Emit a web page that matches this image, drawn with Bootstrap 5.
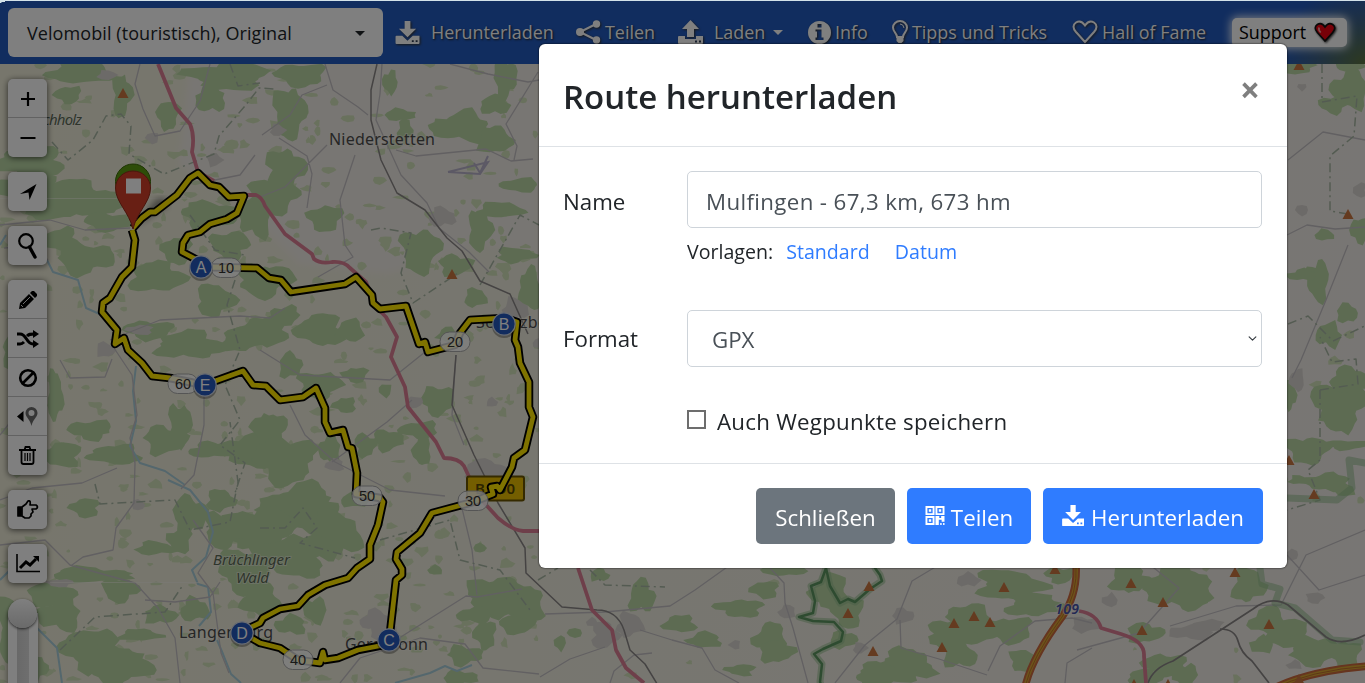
<!DOCTYPE html>
<html lang="de">
<head>
  <meta charset="UTF-8">
  <meta name="viewport" content="width=device-width, initial-scale=1">
  <title>Route herunterladen</title>
  <link href="https://cdn.jsdelivr.net/npm/bootstrap@5.3.3/dist/css/bootstrap.min.css" rel="stylesheet">
  <style>
    body {
      font-family: "Open Sans", "Noto Sans", sans-serif;
      height: 683px;
      overflow: hidden;
      background-color: #f0ede5;
    }
    /* top bar */
    .topbar {
      height: 64px;
      padding: 0 18px 0 8px;
      background: radial-gradient(ellipse 90px 80px at 100% 100%, #5c7440 0, #3d6188 55%, #225abe 100%), #225abe;
      position: relative;
    }
    .topline {
      position: absolute;
      top: 0;
      left: 0;
      z-index: 1060;
      width: 100%;
      height: 1px;
      background-color: #d3e2e9;
    }
    .topline::after {
      content: "";
      position: absolute;
      width: 10px;
      height: 3px;
      background: linear-gradient(165deg, #d3e2e9 50%, transparent 52%);
    }
    .profile {
      width: 375px;
      height: 49px;
      padding: 2px 18px 0 19px;
      margin: 8px 12px 0 0;
      border-radius: 6px;
      background-color: #fff;
      color: #212529;
      font-size: 18px;
      letter-spacing: .08px;
    }
    .menu-grid {
      display: grid;
      grid-template-columns: 181px 102px 130px 84px 180px 160px 115px;
      align-items: center;
      padding-top: 17px;
    }
    .menu-grid a {
      color: #fff;
      font-size: 17.9px;
      line-height: 30px;
      white-space: nowrap;
      text-shadow: 1px 1px 2px #222;
      text-decoration: none;
      display: flex;
      align-items: center;
    }
    .menu-grid svg {
      flex: none;
      fill: #fff;
      filter: drop-shadow(1px 1px 1px #333);
    }
    .wide-gap {
      margin-left: 10px;
    }
    .menu-grid .support {
      height: 29px;
      padding: 0 7px;
      border-radius: 5px;
      background-color: #fff;
      color: #000;
      text-shadow: none;
      box-shadow: 0 0 10px 1px #fff;
    }
    .tri {
      border: 5px solid transparent;
      border-top-color: currentColor;
      border-bottom: 0;
    }
    /* map */
    .map-area {
      height: 619px;
    }
    .map-tools {
      position: absolute;
      left: 8px;
      top: 15px;
      gap: 15px;
    }
    .tool-group {
      width: 39px;
      border-radius: 5px;
      background-color: #fff;
      box-shadow: 0 1px 6px rgba(0, 0, 0, .65);
    }
    .tool-group button {
      display: flex;
      align-items: center;
      justify-content: center;
      width: 39px;
      height: 39px;
      padding: 0;
      border: 0;
      background: none;
    }
    .tool-group button:not(:last-child) {
      box-shadow: inset 0 -1px #c4c4c4;
    }
    .zoom-slider {
      width: 30px;
      height: 90px;
      margin-top: 15px;
      background: linear-gradient(to right, #fff 9px, #d2d2d2 9px, #dedede 21px, #fff 21px);
      box-shadow: 0 1px 6px rgba(0, 0, 0, .5);
    }
    .knob {
      width: 29px;
      height: 29px;
      margin-top: -14px;
      border-radius: 50%;
      background: linear-gradient(#fff, #d4d4d4);
      box-shadow: 0 1px 3px rgba(0, 0, 0, .7);
    }
    .place {
      font-family: "Noto Sans", sans-serif;
      font-size: 16px;
      fill: #4d4d4d;
      stroke: #f5f2ec;
      stroke-width: 2px;
      stroke-opacity: .5;
      paint-order: stroke;
    }
    .area-name {
      font-size: 15px;
      font-style: italic;
      fill: #5d6b57;
    }
    .junction {
      font-size: 14px;
      font-style: italic;
      font-weight: 600;
      fill: #4652a8;
    }
    .pt {
      font-family: "Liberation Sans", sans-serif;
      font-size: 16px;
      text-anchor: middle;
    }
    .km {
      font-size: 14.5px;
      fill: #333;
    }
    /* dialog */
    .modal-dialog.export {
      width: 748px;
      max-width: 748px;
      margin: 44px 0 0 539px;
    }
    .export .modal-content {
      height: 524px;
      border: 0;
      border-radius: 6px;
      color: #212529;
      font-size: 22.3px;
      box-shadow: 0 0 2px #000;
    }
    .export .modal-header {
      height: 103px;
      padding: 0 24px;
      border-bottom: 1px solid #dee2e6;
    }
    .export .modal-title {
      margin-top: 3px;
      font-size: 33px;
      font-weight: 600;
      line-height: 54px;
    }
    .x-close {
      padding: 0;
      margin: -10px 3px 0 0;
      border: 0;
      background: none;
      color: #7f7f7f;
      font-size: 35px;
      font-weight: 700;
      line-height: 36px;
    }
    .export .modal-body {
      padding: 24px 25px 0 24px;
    }
    .lbl {
      width: 124px;
    }
    .export .form-control,
    .export .form-select {
      height: 57px;
      padding: 4px 18px;
      border-color: #ced4da;
      border-radius: 5px;
      color: #495057;
      font-size: 22.3px;
    }
    .export .form-control {
      letter-spacing: .36px;
    }
    .export .form-select {
      padding: 6px 18px 4px 24px;
      background-position: right 4px center;
      background-size: 9px;
    }
    .presets {
      margin: 8px 0 42px 124px;
      height: 32px;
      font-size: 19.6px;
      line-height: 32px;
    }
    .presets a {
      color: #2f7cff;
      text-decoration: none;
    }
    .wp-check {
      margin: 38px 0 0 124px;
      letter-spacing: .26px;
    }
    .wp-check input {
      appearance: none;
      width: 19px;
      height: 19px;
      margin: 0 11px 5px 0;
      border: 2px solid #6d6d6d;
      background-color: #fff;
    }
    .export .modal-footer {
      height: 105px;
      padding: 24px;
      gap: 12px;
      border-top: 1px solid #dee2e6;
    }
    .export .modal-footer .btn {
      height: 56px;
      margin: 0;
      padding: 3px 0 0;
      border: 0;
      border-radius: 5px;
      font-size: 22.3px;
    }
    .export .modal-footer svg {
      margin: -5px 6px 0 0;
    }
    .btn-shut { width: 139px; background-color: #6c757d; }
    .btn-qr { width: 124px; background-color: #2f7cff; }
    .btn-save { width: 220px; background-color: #2f7cff; }
  </style>
</head>
<body>
  <svg width="0" height="0" class="position-absolute">
    <symbol id="i-down" viewBox="0 0 26 24">
      <path d="M9.500 0h6v8h6L12.500 17 3.500 8h6zM1 15.500h6l5.500 5 5.500-5h7V23q0 1-1 1H1q-1 0-1-1v-6.500q0-1 1-1zM17 20v2h2v-2zm4 0v2h2v-2z" fill-rule="evenodd"/>
    </symbol>
    <symbol id="i-up" viewBox="0 0 26 24">
      <path d="M12.500 0 21 9h-5v8H9V9H4zM1 16h6v3h11v-3h7v7q0 1-1 1H1q-1 0-1-1v-6q0-1 1-1zM17 20.500v2h2v-2zm4 0v2h2v-2z" fill-rule="evenodd"/>
    </symbol>
  </svg>

  <!-- Top bar -->
  <nav class="topbar d-flex align-items-start">
    <div class="profile d-flex align-items-center justify-content-between">
      <span>Velomobil (touristisch), Original</span>
      <span class="tri"></span>
    </div>
    <div class="menu-grid">
      <a href="#"><svg width="26" height="23"><use href="#i-down"/></svg><span class="wide-gap">Herunterladen</span></a>
      <a href="#"><svg width="25" height="24" viewBox="0 0 25 24"><path d="M20 4 4 12l16 8" fill="none" stroke="#fff" stroke-width="2"/><circle cx="20.500" cy="4" r="3.700"/><circle cx="4" cy="12" r="4"/><circle cx="20.500" cy="20" r="3.700"/></svg><span class="ps-1">Teilen</span></a>
      <a href="#"><svg width="26" height="24"><use href="#i-up"/></svg><span class="wide-gap me-2">Laden</span><span class="tri"></span></a>
      <a href="#"><svg width="23" height="23" viewBox="0 0 23 23"><path fill-rule="evenodd" d="M11.500 0a11.500 11.500 0 1 1 0 23 11.500 11.500 0 0 1 0-23zM9.500 3v3.500h4V3zM7.500 8.500v2H9v6H7.500v2.500h8v-2.500h-2v-8z"/></svg><span class="ps-1">Info</span></a>
      <a href="#"><svg width="16" height="24" viewBox="0 0 16 24" class="me-1"><path d="M5 17c0-4-4-5-4-9.500a7 6.500 0 0 1 14 0C15 12 11 13 11 17z" fill="none" stroke="#fff" stroke-width="2"/><path d="M8 4q3.500 0 4 4" fill="none" stroke="#fff"/><path d="M4.500 16h7v5l-2 2h-3l-2-2z"/></svg><span>Tipps und Tricks</span></a>
      <a href="#"><svg width="26" height="24" viewBox="0 0 26 24"><path d="M13 22 4 12Q-1 6 4 2.500 9-.500 13 5.500 17-.500 22 2.500 27 6 22 12z" fill="none" stroke="#fff" stroke-width="2"/></svg><span class="ps-1">Hall of Fame</span></a>
      <a href="#" class="support justify-content-between"><span>Support</span><svg width="22" height="21" viewBox="0 0 26 24" class="me-1"><path d="M13 22 4 12Q-1 6 4 2.500 9-.500 13 5.500 17-.500 22 2.500 27 6 22 12z" fill="#f00010" stroke="#111" stroke-width="2"/><path d="M6 6q-1 3 2 6" stroke="#ff9a9a" stroke-width="2" fill="none"/></svg></a>
    </div>
  </nav>
  <div class="topline"></div>

  <!-- Map -->
  <div class="map-area position-relative">
    <svg width="1365" height="619" viewBox="0 64 1365 619" class="d-block">
      <defs>
        <linearGradient id="land" x1="0" y1="0" x2="1" y2="0">
          <stop offset="0" stop-color="#efedd9"/>
          <stop offset=".45" stop-color="#efede0"/>
          <stop offset="1" stop-color="#f1ede8"/>
        </linearGradient>
        <filter id="soft"><feGaussianBlur stdDeviation="3"/></filter>
      </defs>
      <rect y="64" width="1365" height="619" fill="url(#land)"/>
      <path d="M190 64h349v190l-60-10-90 30-90-10-60-60-60-40z" fill="#f1ede6" filter="url(#soft)"/>
      <g id="specks" fill="#d3e2bb"></g>
      <g id="woods" fill="#bad7a5"></g>
      <g id="towns" fill="#d9d5d0"></g>

      <!-- rivers -->
      <g fill="none" stroke="#a9cedb" stroke-width="2" stroke-linejoin="round">
        <path d="M0 245 6 235M47 260l6 12 25 8 8 28 18 8M136 366l-3 25 3 30-6 25 10 17 25 8 20 14M168 480l22 10 18 22 5 20-7 25-14 13 6 14 10 3 3 25-12 14M0 580l10-10M37 628l20 20 5 35"/>
        <path d="M217 640l6 14 8 20 10 9M395 683l35-10 15-7 12 5 15-6"/>
      </g>
      <!-- minor roads -->
      <g fill="none" stroke="#c4c0c4" stroke-width="1.300" stroke-linejoin="round">
        <path d="M140 64l-5 20 8 25 12 27 25-5 20-30 10-37M0 225l50-5 35 10 45-2M255 155l-15 20-40 8M48 260l-14-14-30 2M325 64l8 26 25 17 10 8M262 135l28-20 12-20 25-10M260 197l25-10 42-42M279 138l28 18 5 18-5 34M382 64l-2 30-4 26 25 55 26 28 12 25 30 24 20 20M396 150l20 6 70-7 25 12 22-2M355 155l-15 45 5 45 8 12-35 20M450 64l38 10 40 8 11-2M538 72l-32 52 11 22-3 14M110 340l50-20 80-4 30 2 15-10M60 360l10 18 35-1 7-18M112 345l20 30 5 40-7 23 5 25-1 40-18 25-3 22-30 7-11 8M0 545l45-5 25 25 65 18 23 25 17 30 5 45M145 600l30 2 35-5 10-15M0 500l32-12 50-5 35-15M204 395v30l-10 50-13 14M193 520l20 28-15 25 15 20 8 60 8 20M260 350l40 25 90 5 35-28M290 405l15 30 30 27 55 28 55 6M332 462l55-40 25-22M456 355l-4 60 12 30M460 500l12 50 5 45M396 640l70-44 11 1 45-8M340 683l20-25 60-20 45 6 18 24 56 6M0 435l12-15"/>
        <path d="M540 677l30-18 35-12M545 614l60-2 65-6 25-16 35-25M610 683l4-12 20-16 18-2M640 630l32 10 30 8 13 22 24 13M770 568l14 15 1 20 8 25 15 55M835 683l30-38 32-26 15-38 40-24M900 620l1 28 38 11 48 16M988 671l12-25 35-25 37-3 20 5M1065 683l2-20 25-15M1077 650l62-17 40-45-35-28M1170 626l66-20 45-1 25-50 59-25M1287 555l32 35 46-15M1287 235l20-10 28 4 30-2M1288 160l35-28 42 8M1348 245l-22 55-25 60-9 18"/>
      </g>
      <!-- district borders -->
      <g fill="none" stroke="#a8b7a4" stroke-width="1.500" stroke-dasharray="9 4 2 4" stroke-linejoin="round">
        <path d="M52 142l16 18 25-20 13-24 15-2 10 12-2 28 35 20 50-20 5-18 26-30 14-18 16 1M230 64l8 22 22-3M190 215l25 35 30 5M235 280l-8 25 13 45-15 35 15 35-20 25 25 18-10 30M95 484l5 20 75-4 15 30 40-8 8-40-8-60M60 650l35-33 70-5 18-27M260 528h25l18-20 14 20-17 15 55 15M371 230l10-2 30 5-10 40 12 30 45-30M480 285l40-70 19 10M380 540l70-20 10 40 40 10 30 40M538 580l20-12M590 570l15 15 60 2M1322 64v38l35-6-3 40-24 20v55l18 3"/>
        <path d="M1288 324l20-8 25 25 38-18M1320 390v70l-12 10 12 30-33 10M1320 390l38-6-2-25-24 3-12-25"/>
      </g>
      <!-- nature park boundary -->
      <g fill="none" stroke-linejoin="round" stroke-linecap="round">
        <g id="park" stroke="#96c08f" stroke-width="7" opacity=".55">
          <path d="M826 568l4 18 10 17 8-4 7 3 15-13 12-8-2-6-5-7M826 568l-5 14-10 4 4 15-2 12-14 4 14 4 21 1 9 10-2 9-18 8-9 5 8 10-2 18 4 10M1260 568l2 16 18 5-5 14 20 5 37 32 28 2M1287 498l50 2 15-12-3-28 16 3"/>
        </g>
        <path d="M826 568l4 18 10 17 8-4 7 3 15-13 12-8-2-6-5-7M826 568l-5 14-10 4 4 15-2 12-14 4 14 4 21 1 9 10-2 9-18 8-9 5 8 10-2 18 4 10" stroke="#5d9661" stroke-width="2.500"/>
      </g>
      <!-- railways -->
      <g fill="none" stroke="#8a8686" stroke-linejoin="round">
        <path d="M377 64l-6 26v30l10 40 16 33 28 17 22 28 15 13 18 30 30 13 18 40M456 355l-4 50 22 50 24 48 27 45 1 25 36 34 35 3q20 0 27 20l6 20 15 14 14 23" stroke-width="1.500"/>
        <path d="M1148 683q5-15 25-22l80-52q18-14 35-4l38 32q15 10 39-2M1220 629q15 0 18 12t14 20l17 22" stroke-width="1.700"/>
      </g>
      <!-- main roads -->
      <g fill="none" stroke="#dd7f95" stroke-width="3.800" stroke-linejoin="round">
        <path d="M158 64l18 44 14 16q5 12 2 28l6 20 16 9M244 195h12q6 2 9 11l20 28 27 20 2 5q6 5 18 3 12-1 18 6l16 14 10 25 10 10 11 20-6 20 14 30 3 20 28 35 8 16q15 0 20 8l14 30 20 22q14 12 25 13h20M578 568l14 42 20 20 4 20 10 18 18 15"/>
        <path d="M1079 611q18 3 22 17l20 6q24 7 23 22l2 27"/>
      </g>
      <g fill="none">
        <path d="M1076 564q2 30-14 53-30 40-37 70M1270 690q40-20 100-24" stroke="#cc6a3e" stroke-width="7.500"/>
        <path d="M1076 564q2 30-14 53-30 40-37 70M1270 690q40-20 100-24" stroke="#d9a832" stroke-width="3.500"/>
        <path d="M1076 564q2 30-14 53-30 40-37 70M1270 690q40-20 100-24" stroke="#b9602f" stroke-width=".8"/>
      </g>
      <g id="peaks" fill="#cb7640"></g>
      <!-- airfield -->
      <path d="M448 172l40-10-8 12-32-2M474 163l6 10 8-17" fill="none" stroke="#b9b3cb" stroke-width="2"/>
      <path d="M0 198.500h190M50 582.500h150" stroke="#f7f5ee" opacity=".5"/>

      <text class="place" x="329" y="145" textLength="106">Niederstetten</text>
      <text class="place area-name" x="27" y="125" textLength="55">Buchholz</text>
      <text class="place area-name" x="213" y="565" textLength="77">Brüchlinger</text>
      <text class="place area-name" x="236" y="583" textLength="33">Wald</text>
      <text class="place" x="179" y="638" textLength="94">Langenburg</text>
      <text class="place" x="345" y="650" textLength="83">Gerabronn</text>
      <text class="place" x="476" y="328" textLength="88">Schrozberg</text>
      <text class="place junction" x="1055" y="614" textLength="24">109</text>
      <rect x="467" y="476.500" width="57" height="24" rx="2" fill="#e8bd00" stroke="#6a5500" stroke-width="2"/>
      <text x="475" y="494" textLength="40" font-family="Noto Sans" font-size="15" font-weight="600" fill="#594900">B 290</text>

      <!-- route -->
      <path d="M136 226l20-27 10-1 2 8z" opacity=".4" filter="url(#soft)"/>
      <path id="route" d="M133 228 142 218 150 212 155 212 177 195 190 178 198 173 210 185 219 187 229 197 244 196 237 213 227 219 210 224 200 232 188 235 183 243 182 252 201 262 201 267 257 268 269 278 281 280 291 292 345 284 356 277 372 295 373 303 380 309 406 306 419 344 425 342 428 352 455 345 460 333 470 320 505 318 517 322 515 340 518 347 520 363 529 382 529 407 533 417 525 450 514 458 512 467 500 490 497 486 491 487 493 494 473 502 432 513 420 533 397 552 396 559 402 569 402 575 396 580 390 633 389 644 358 650 338 658 325 660 323 652 320 663 298 660 280 648 260 643 241 632 260 623 263 618 280 609 298 606 308 595 325 585 348 578 357 568 370 559 370 545 378 525 383 502 380 498 356 494 357 473 352 448 348 447 343 430 330 433 325 422 325 408 316 388 303 397 280 400 266 386 253 385 243 371 204 385 170 378 152 376 142 363 128 350 124 338 115 344 117 330 102 312 103 303 110 298 122 277 132 267 135 240 132 230" fill="none" stroke="#000" stroke-width="8.500" stroke-linejoin="round"/>
      <use href="#route" id="routeTop"/>

      <!-- distance and waypoint markers -->
      <g id="marks"></g>
      <circle cx="133" cy="181.500" r="17.500" fill="#5a9a10" stroke="#3c6a08"/>
      <path d="M133 229C129 212 115.500 202 115.500 188a17.500 17 0 0 1 35 0C150.500 202 137 212 133 229z" fill="#d03f28" stroke="#932c1b"/>
      <path d="M126 178.500h15v15h-15z" fill="#fff"/>
    </svg>

    <div class="map-tools d-flex flex-column">
      <div class="tool-group">
        <button><svg width="16" height="16"><path d="M8 1v14M1 8h14" stroke="#000" stroke-width="2.200"/></svg></button>
        <button><svg width="16" height="16"><path d="M.500 8h15" stroke="#000" stroke-width="2"/></svg></button>
      </div>
      <div class="tool-group">
        <button><svg width="18" height="18"><path d="M17.500 1 10.500 17 9.500 9.500 1 11z"/></svg></button>
      </div>
      <div class="tool-group">
        <button><svg width="20" height="26" fill="none" stroke="#000"><circle cx="8" cy="8" r="6.800" stroke-width="2.200"/><path d="M11.500 14 17 24" stroke-width="3.400" stroke-linecap="round"/></svg></button>
      </div>
      <div class="tool-group">
        <button><svg width="18" height="18"><path d="M0 18l1-6L10 3l5 5-9 9zM11 2l2-2h2l3 3v2l-2 2z"/><path d="M4 13l7-7M2 14l2 2" stroke="#ddd"/></svg></button>
        <button><svg width="22" height="18" fill="none" stroke="#000" stroke-width="3"><path d="M0 4h3c7 0 6 10 13 10h1M0 14h3c2 0 3-1 4-2M10 6c2-2 3-2 7-2"/><path d="M16 0l6 4-6 4zM16 10l6 4-6 4z" fill="#000" stroke="none"/></svg></button>
        <button><svg width="20" height="20" fill="none" stroke="#000" stroke-width="2.600"><circle cx="10" cy="10" r="7.800"/><path d="M4.500 15.500l11-11"/></svg></button>
        <button><svg width="21" height="19"><path d="M0 9.500 6.500 4v11z"/><path fill="#6b6b6b" fill-rule="evenodd" d="M14.500 0a6 6 0 0 1 6 6c0 4-5 7-6 13-1-6-6-9-6-13a6 6 0 0 1 6-6zm0 3a3 3 0 1 0 0 6 3 3 0 0 0 0-6z"/></svg></button>
        <button><svg width="18" height="19" fill="none" stroke="#000" stroke-width="1.800"><path d="M0 4h17M5.500 4l1-3h4l1 3M2.500 4v12q0 2 2 2h8q2 0 2-2V4"/><path d="M6 7v8M8.500 7v8M11 7v8" stroke-width="1.200"/></svg></button>
      </div>
      <div class="tool-group">
        <button><svg width="22" height="19" fill="none" stroke="#000" stroke-width="1.700" stroke-linejoin="round"><path d="M5 7l4-3 2-3q3-1 2 4h6q3 2 0 4h-4l1 3-2 2v2l-2 2H8l-3-2z"/><path d="M1 7h3v9H1z" fill="#000"/></svg></button>
      </div>
      <div class="tool-group">
        <button><svg width="24" height="19"><path d="M1 0v17.500h23" fill="none" stroke="#000" stroke-width="1.600"/><path d="M4 14l6-6 4 3 6-6" fill="none" stroke="#000" stroke-width="3"/><path d="M17 2h6v6z"/></svg></button>
      </div>
      <div class="zoom-slider"><div class="knob"></div></div>
    </div>
  </div>

  <div class="modal-backdrop show"></div>

  <!-- Download dialog -->
  <div class="modal d-block overflow-hidden" tabindex="-1">
    <div class="modal-dialog export">
      <div class="modal-content">
        <div class="modal-header justify-content-between">
          <h5 class="modal-title">Route herunterladen</h5>
          <button type="button" class="x-close">×</button>
        </div>
        <div class="modal-body">
          <div class="d-flex align-items-center">
            <label for="name" class="lbl pt-1">Name</label>
            <input type="text" class="form-control flex-fill w-auto pt-2" id="name" value="Mulfingen - 67,3 km, 673 hm">
          </div>
          <div class="presets">Vorlagen: <a href="#" class="ms-2">Standard</a> <a href="#" class="ms-3 ps-1">Datum</a></div>
          <div class="d-flex align-items-center">
            <label for="format" class="lbl">Format</label>
            <select class="form-select flex-fill w-auto" id="format"><option>GPX</option></select>
          </div>
          <div class="wp-check d-flex align-items-center">
            <input type="checkbox" id="wp">
            <label for="wp">Auch Wegpunkte speichern</label>
          </div>
        </div>
        <div class="modal-footer flex-nowrap">
          <button type="button" class="btn text-white btn-shut">Schließen</button>
          <button type="button" class="btn text-white btn-qr d-flex align-items-center justify-content-center"><svg width="20" height="19" viewBox="0 0 20 20" fill="#fff"><path fill-rule="evenodd" d="M0 0h9.500v9.500H0zm2 2v5.500h5.500V2zm8.500-2H20v9.500h-9.500zm2 2v5.500H18V2zM0 10.500h9.500V20H0zm2 2V18h5.500v-5.500zM3.500 3.500H6V6H3.500zm10.500 0h2.500V6H14zM3.500 14H6v2.500H3.500zM10.500 10.500h4v2h2v-2H20v6h-3v-2h-3V20h-3.500zm5 7.500h1.500v2h-1.500zm3 0H20v2h-1.500z"/></svg>Teilen</button>
          <button type="button" class="btn text-white btn-save d-flex align-items-center justify-content-center"><svg width="23" height="21" fill="#fff"><use href="#i-down"/></svg>Herunterladen</button>
        </div>
      </div>
    </div>
  </div>

  <script>
    const NS = "http://www.w3.org/2000/svg";
    let seed = 7;
    function rnd() {
      seed = (seed * 16807) % 2147483647;
      return seed / 2147483647;
    }

    function add(parent, tag, attrs, text) {
      const el = document.createElementNS(NS, tag);
      for (const key in attrs) el.setAttribute(key, attrs[key]);
      if (text) el.textContent = text;
      document.getElementById(parent).appendChild(el);
    }

    // ragged patch around a centre point
    function blob(parent, x, y, rx, ry) {
      const n = Math.max(8, Math.round((rx + ry) / 1.6));
      const p = rnd() * 6, q = rnd() * 6;
      let d = "";
      for (let i = 0; i < n; i++) {
        const a = i / n * Math.PI * 2;
        const k = 0.86 + 0.17 * Math.sin(3 * a + p) + 0.12 * Math.sin(5 * a + q) + rnd() * 0.2;
        d += (i ? "L" : "M") + (x + Math.cos(a) * rx * k).toFixed(1) + " " + (y + Math.sin(a) * ry * k).toFixed(1);
      }
      add(parent, "path", { d: d + "z" });
    }

    const woods = [
      [80,72,32,12],[122,95,10,22],[68,95,14,9],[228,76,42,14],[210,98,15,15],[168,115,12,15],[30,162,35,16],[75,200,52,20],[25,190,30,18],
      [110,222,26,9],[85,258,28,16],[60,240,20,12],[210,215,30,14],[255,215,16,23],[275,195,26,18],[285,170,20,22],[290,112,17,25],[300,75,25,12],
      [325,218,18,14],[265,280,28,17],[230,245,20,14],[176,250,15,14],[158,277,28,16],[215,300,20,16],[190,345,36,14],[150,330,25,10],[240,340,20,12],
      [265,330,25,15],[320,330,25,17],[285,315,15,10],[350,330,14,12],[290,365,12,13],[30,320,18,12],[15,350,13,18],[55,395,8,25],[25,420,14,12],
      [90,430,22,10],[115,455,28,10],[60,455,22,12],[165,440,22,14],[180,425,12,22],[210,450,22,8],[250,450,28,17],[270,430,18,18],[285,460,30,25],
      [300,510,42,25],[260,530,35,25],[335,535,25,25],[295,555,34,22],[225,530,22,18],[245,570,28,22],[260,600,20,16],[220,500,14,12],
      [85,508,16,10],[190,515,18,20],[180,540,12,14],[155,548,20,7],[90,575,42,8],[120,590,18,12],[50,595,25,12],[60,615,22,16],[15,630,18,35],
      [90,650,28,22],[120,665,30,20],[30,670,18,15],[160,615,16,9],[140,635,22,6],[195,610,15,12],[290,625,16,10],[315,610,12,14],[320,385,22,14],
      [345,405,12,8],[355,375,13,8],[438,400,17,15],[388,440,16,11],[420,430,20,9],[422,450,9,17],[365,445,11,12],[385,390,7,7],[330,450,12,15],[355,500,15,8],
      [462,127,30,16],[495,140,18,14],[495,105,15,10],[505,78,12,20],[400,115,16,6],[390,82,8,12],[405,130,8,12],[420,250,20,23],[455,265,17,11],
      [475,298,12,10],[520,185,20,7],[500,210,25,8],[515,255,20,8],[530,290,12,22],[480,230,12,20],[447,335,10,8],[485,320,12,6],
      [495,595,28,20],[525,605,20,18],[475,615,18,8],[465,655,18,10],[485,635,12,15],[460,678,18,8],[517,625,18,10],[435,570,8,5],[480,548,7,5],
      [642,596,14,17],[600,575,10,7],[680,624,18,9],[740,608,24,9],[765,590,15,9],[770,638,16,16],[776,652,18,11],[705,640,18,8],[740,670,16,6],[560,643,6,8],[575,633,8,5],
      [785,568,22,9],[830,592,20,18],[848,612,16,16],[843,640,14,9],[905,665,30,16],[885,675,32,12],[970,625,32,20],[950,635,24,13],[1010,585,35,15],[1035,605,30,12],
      [1010,630,22,14],[960,655,17,13],[1022,660,13,11],[1060,575,16,8],[1130,580,22,14],[1178,585,35,20],[1190,600,20,10],[1145,633,20,10],[1165,665,22,12],[1145,677,18,8],[1185,675,14,12],
      [1248,585,17,18],[1268,620,18,14],[1290,635,22,15],[1315,650,28,15],[1345,655,16,15],[1262,645,12,9],
      [1350,90,18,20],[1333,105,14,9],[1295,68,20,6],[1350,67,15,5],[1325,235,10,6],[1360,230,10,13],[1318,280,12,20],[1302,275,15,6],[1347,313,11,10],[1329,335,13,13],
      [1340,405,28,25],[1350,380,20,13],[1308,450,22,14],[1345,445,24,5],[1327,482,22,9],[1345,490,10,7],[1298,480,10,5],[1290,395,6,16]
    ];
    woods.forEach(w => blob("woods", ...w));

    for (let i = 0; i < 600; i++) {
      blob("specks", rnd() * (i % 6 ? 540 : 1365), 64 + rnd() * 619, 2 + rnd() * 6, 1.5 + rnd() * 4);
    }

    [[107,75,10,5],[152,138,7,6],[215,160,8,7],[278,130,8,6],[442,217,14,10],[515,310,14,12],[545,345,12,8],[485,470,22,10],[500,485,14,8],[375,620,16,10],
     [385,635,14,10],[335,465,10,7],[140,330,14,5],[105,350,10,8],[605,635,14,14],[630,625,14,12],[592,622,6,5],[787,612,9,7],[903,616,11,8],[860,648,8,6],
     [735,645,6,5],[1085,625,14,8],[1192,632,22,8],[1210,625,15,6],[1315,598,10,6],[1295,665,8,5],[1302,87,5,4],[1302,210,7,6],[1297,380,8,12],[1360,190,7,8],
     [415,402,8,6],[492,402,6,5],[138,505,7,6],[60,583,14,4],[1110,600,8,7],[1290,555,9,6],[968,580,12,7]].forEach(t => blob("towns", ...t));

    const peaks = [[123,94],[452,275],[1348,215],[1289,461],[1314,495],[869,587],[848,614],[873,652],[954,624],[942,648],[974,617],[990,623],[1004,588],
      [1055,570],[1131,584],[1163,603],[1142,631],[1235,573],[1269,625],[1134,685],[1168,685],[1299,680],[1299,66]];
    peaks.forEach(([x, y]) => add("peaks", "path", { d: `M${x} ${y - 6}l5.500 10h-11z` }));

    // yellow core of the track over its black casing
    const core = document.getElementById("route").cloneNode();
    core.removeAttribute("id");
    core.setAttribute("stroke", "#ffe600");
    core.setAttribute("stroke-width", "4.8");
    document.getElementById("routeTop").replaceWith(core);

    [[226,268,10],[455,342,20],[473,501,30],[298,660,40],[367,496,50],[183,384,60]].forEach(([x, y, km]) => {
      add("marks", "rect", { x: x - 15, y: y - 10, width: 30, height: 19.5, rx: 9.5, fill: "#fff", "fill-opacity": 0.82, stroke: "#aaa" });
      add("marks", "text", { x: x, y: y + 5, class: "pt km" }, String(km));
    });
    [[201,267,"A"],[504,324,"B"],[389,640,"C"],[242,633,"D"],[205,385,"E"]].forEach(([x, y, c]) => {
      add("marks", "circle", { cx: x, cy: y + 2, r: 12, opacity: 0.3 });
      add("marks", "circle", { cx: x, cy: y, r: 11.2, fill: "#2458bd", stroke: "#d5dbe5", "stroke-width": 1.2 });
      add("marks", "text", { x: x, y: y + 5.5, class: "pt", fill: "#fff" }, c);
    });
  </script>
  <script src="https://cdn.jsdelivr.net/npm/bootstrap@5.3.3/dist/js/bootstrap.bundle.min.js"></script>
</body>
</html>
